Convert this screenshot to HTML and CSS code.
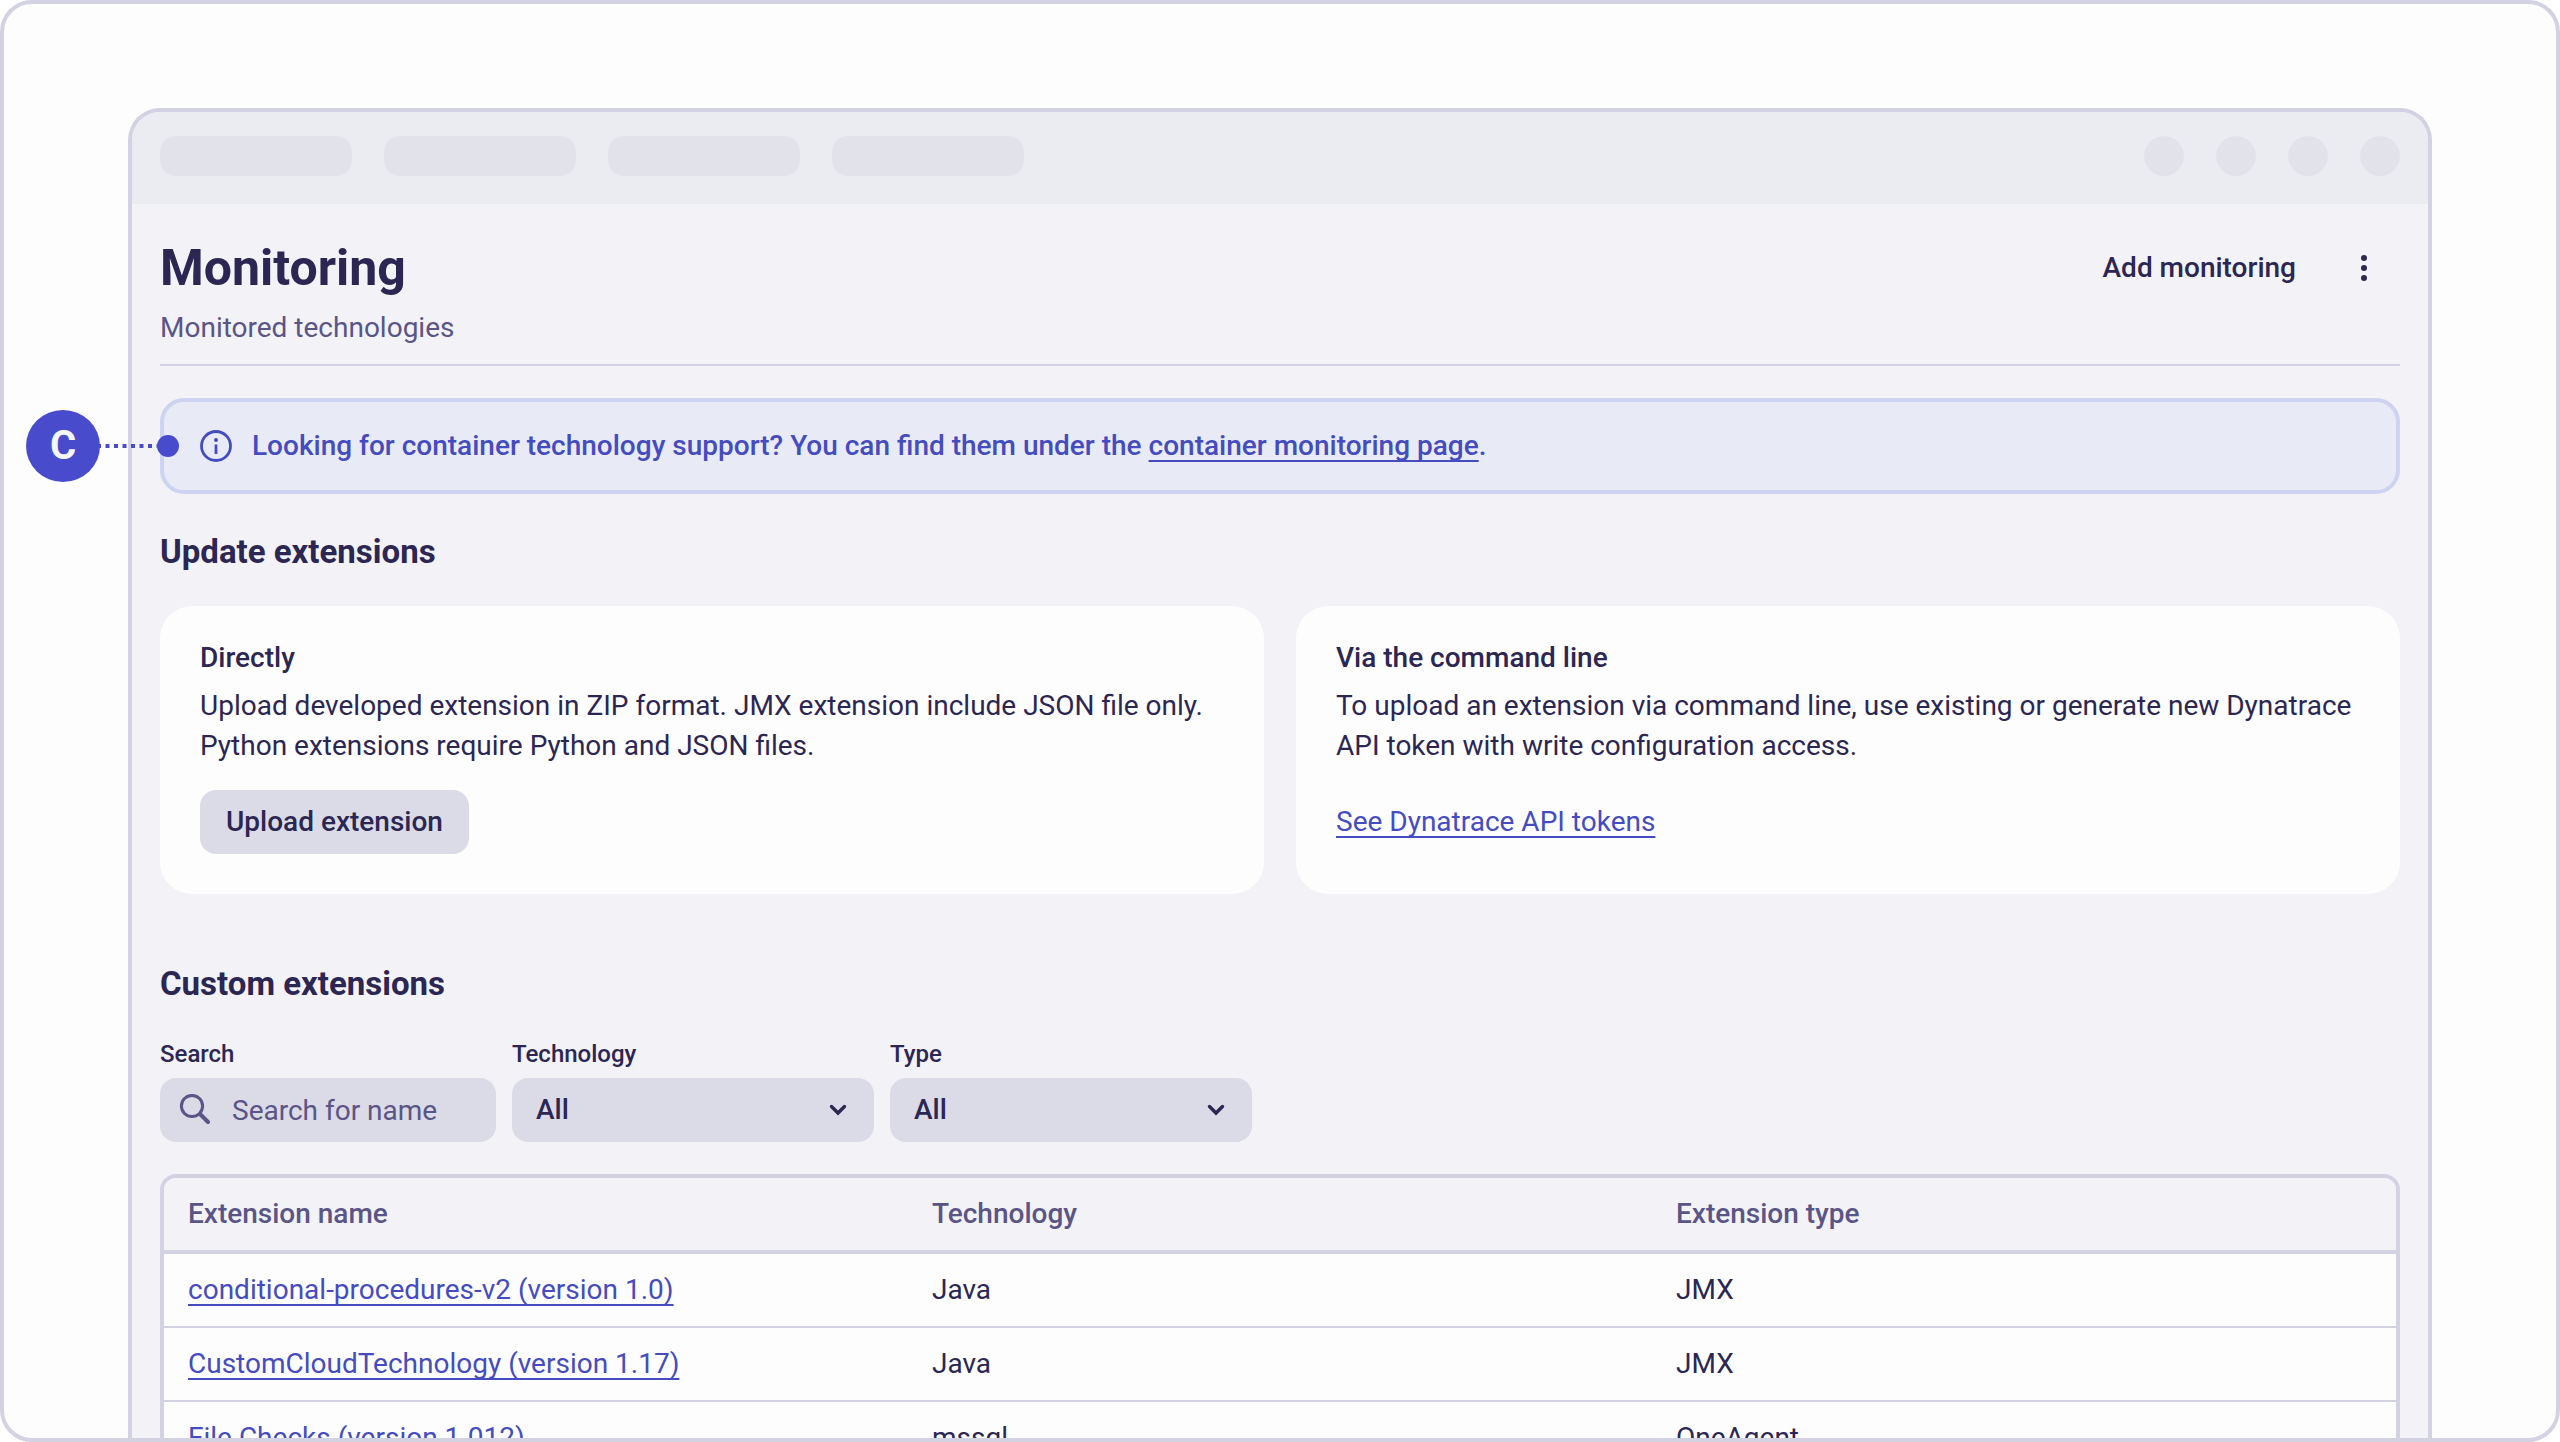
FILE: index.html
```html
<!DOCTYPE html>
<html lang="en">
<head>
<meta charset="utf-8">
<title>Monitoring</title>
<meta name="viewport" content="width=device-width, initial-scale=1">
<link rel="stylesheet" href="styles.css">
</head>
<body>
<div class="stage">
  <div class="window">
    <div class="topbar">
      <div class="topbar-group">
        <span class="pill"></span><span class="pill"></span><span class="pill"></span><span class="pill"></span>
      </div>
      <div class="topbar-group">
        <span class="dot"></span><span class="dot"></span><span class="dot"></span><span class="dot"></span>
      </div>
    </div>
    <main class="content">
      <header class="page-header">
        <div>
          <h1 class="title">Monitoring</h1>
          <p class="subtitle">Monitored technologies</p>
        </div>
        <div class="actions">
          <button class="ghost" type="button">Add monitoring</button>
          <button class="kebab" type="button" aria-label="More actions">
            <svg width="8" height="28" viewBox="0 0 8 28"><circle cx="4" cy="4" r="3"/><circle cx="4" cy="14" r="3"/><circle cx="4" cy="24" r="3"/></svg>
          </button>
        </div>
      </header>

      <div class="banner">
        <svg class="banner-icon" width="32" height="32" viewBox="0 0 32 32" aria-hidden="true">
          <circle cx="16" cy="16" r="14.5" fill="none" stroke="currentColor" stroke-width="2.8"/>
          <circle cx="16" cy="10" r="2" fill="currentColor"/>
          <path d="M16 14.5V24" stroke="currentColor" stroke-width="2.8"/>
        </svg>
        <p class="banner-text">Looking for container technology support? You can find them under the <a href="#containers">container monitoring page</a>.</p>
        <div class="marker" aria-hidden="true">
          <span class="marker-badge">C</span>
          <svg class="marker-line" width="80" height="22" viewBox="0 0 80 22"><path d="M-2 11H58" stroke="currentColor" stroke-width="4" stroke-dasharray="4 4.5"/><circle cx="69" cy="11" r="11" fill="currentColor"/></svg>
        </div>
      </div>

      <h2 class="section-title">Update extensions</h2>
      <div class="cards">
        <section class="card">
          <h3 class="card-title">Directly</h3>
          <p class="card-text">Upload developed extension in ZIP format. JMX extension include JSON file only. Python extensions require Python and JSON files.</p>
          <button class="button" type="button">Upload extension</button>
        </section>
        <section class="card">
          <h3 class="card-title">Via the command line</h3>
          <p class="card-text">To upload an extension via command line, use existing or generate new Dynatrace API token with write configuration access.</p>
          <a class="card-link" href="#tokens">See Dynatrace API tokens</a>
        </section>
      </div>

      <h2 class="section-title section-title-custom">Custom extensions</h2>
      <form class="filters">
        <div class="field field-search">
          <label for="search">Search</label>
          <div class="control">
            <svg class="search-icon" width="32" height="32" viewBox="0 0 32 32" aria-hidden="true"><g fill="none" stroke="currentColor" stroke-linecap="round"><circle cx="14" cy="12" r="10.6" stroke-width="3"/><path d="M22.5 20.5L30 28" stroke-width="4"/></g></svg>
            <input id="search" type="text" placeholder="Search for name">
          </div>
        </div>
        <div class="field field-select">
          <label for="technology">Technology</label>
          <div class="control">
            <select id="technology"><option>All</option></select>
            <svg class="chevron" width="20" height="14" viewBox="0 0 20 14" aria-hidden="true"><path d="M3.5 2.5L10 9l6.5-6.5" fill="none" stroke="currentColor" stroke-width="3.4" stroke-linecap="round"/></svg>
          </div>
        </div>
        <div class="field field-select">
          <label for="type">Type</label>
          <div class="control">
            <select id="type"><option>All</option></select>
            <svg class="chevron" width="20" height="14" viewBox="0 0 20 14" aria-hidden="true"><path d="M3.5 2.5L10 9l6.5-6.5" fill="none" stroke="currentColor" stroke-width="3.4" stroke-linecap="round"/></svg>
          </div>
        </div>
      </form>

      <div class="table-frame">
        <table class="table">
          <thead>
            <tr><th scope="col">Extension name</th><th scope="col">Technology</th><th scope="col">Extension type</th></tr>
          </thead>
          <tbody>
            <tr><td><a href="#e1">conditional-procedures-v2 (version 1.0)</a></td><td>Java</td><td>JMX</td></tr>
            <tr><td><a href="#e2">CustomCloudTechnology (version 1.17)</a></td><td>Java</td><td>JMX</td></tr>
            <tr><td><a href="#e3">File Checks (version 1.012)</a></td><td>mssql</td><td>OneAgent</td></tr>
          </tbody>
        </table>
      </div>
    </main>
  </div>
</div>
</body>
</html>
```
FILE: styles.css
```css
:root {
  --ink: #2c2653;
  --muted: #5a5586;
  --link: #454cc0;
  --accent: #484ccc;
  --line: #d3d2e2;
  --page: #fdfdfe;
  --surface: #f2f2f7;
  --control: #dadbe6;
}

* { box-sizing: border-box; }

body {
  margin: 0;
  background: #fff;
  color: var(--ink);
  font: 400 28px/40px Roboto, "Noto Sans", sans-serif;
}

h1, h2, h3, p { margin: 0; }
a { color: var(--link); text-decoration-thickness: 2px; text-underline-offset: 5px; text-decoration-skip-ink: none; }
button, input, select { margin: 0; border: 0; font: inherit; color: inherit; background: none; }

.stage {
  height: 100vh;
  padding: 104px 124px 0;
  border: 4px solid var(--line);
  border-radius: 32px;
  background: var(--page);
  overflow: hidden;
}

.window {
  border: 4px solid var(--line);
  border-bottom: 0;
  border-radius: 32px 32px 0 0;
  background: var(--surface);
}

.topbar {
  display: flex;
  justify-content: space-between;
  padding: 24px 28px 28px;
  border-radius: 28px 28px 0 0;
  background: #ebecf1;
}
.topbar-group { display: flex; gap: 32px; }
.pill { width: 192px; height: 40px; border-radius: 16px; background: #e2e3ea; }
.dot { width: 40px; height: 40px; border-radius: 50%; background: #e2e3ea; }

.content { padding: 32px 28px 0; }

.page-header {
  display: flex;
  justify-content: space-between;
  align-items: flex-start;
  padding-bottom: 16px;
  border-bottom: 2px solid var(--line);
}
.title { font-size: 50px; line-height: 64px; font-weight: 700; }
.subtitle { margin-top: 8px; color: var(--muted); }
.actions { display: flex; align-items: center; height: 64px; }
.ghost { padding: 0 24px; font-weight: 500; }
.kebab { display: flex; justify-content: center; width: 64px; padding: 0; margin: 0 4px 0 12px; }
.kebab svg { fill: var(--ink); }

.banner {
  position: relative;
  display: flex;
  align-items: center;
  gap: 20px;
  margin-top: 32px;
  padding: 24px 36px;
  border: 4px solid #cdd3f1;
  border-radius: 24px;
  background: #e8ebf6;
  color: var(--link);
  font-weight: 500;
}
.banner-icon { flex: none; }

.marker { position: absolute; left: -138px; top: 8px; display: flex; align-items: center; color: var(--accent); }
.marker-badge {
  width: 74px;
  border-radius: 50%;
  background: var(--accent);
  color: #f4f5fd;
  font-size: 40px;
  line-height: 72px;
  font-weight: 700;
  text-align: center;
}
.marker-line { margin-left: -1px; overflow: visible; }

.section-title { margin-top: 36px; font-size: 33px; line-height: 44px; font-weight: 700; }
.section-title-custom { margin-top: 68px; }

.cards { display: grid; grid-template-columns: 1fr 1fr; gap: 32px; margin-top: 32px; }
.card { padding: 32px 40px 40px; border-radius: 32px; background: var(--page); }
.card-title { font-size: 28px; font-weight: 500; }
.card-text { margin-top: 8px; }
.button {
  display: block;
  margin-top: 24px;
  padding: 12px 26px;
  border-radius: 16px;
  background: var(--control);
  font-weight: 500;
}
.card-link { display: inline-block; margin-top: 36px; }

.filters { display: flex; gap: 16px; margin-top: 32px; }
.field label { display: block; font-size: 24px; line-height: 32px; font-weight: 500; margin-bottom: 8px; }
.field-search { width: 336px; }
.field-select { width: 362px; }
.control { position: relative; height: 64px; border-radius: 16px; background: var(--control); }
.control input, .control select { width: 100%; height: 64px; padding: 0 24px; appearance: none; }
.control select { font-weight: 500; }
.control input { padding-left: 72px; }
.control input::placeholder { color: var(--muted); opacity: 1; }
.search-icon { position: absolute; left: 18px; top: 16px; color: var(--muted); }
.chevron { position: absolute; right: 26px; top: 26px; pointer-events: none; }

.table-frame {
  margin-top: 32px;
  border: 4px solid var(--line);
  border-radius: 16px;
  background: var(--page);
  overflow: hidden;
}
.table { width: 100%; table-layout: fixed; border-collapse: separate; border-spacing: 0; }
.table th, .table td { padding: 16px 24px; text-align: left; }
.table th { border-bottom: 4px solid var(--line); background: var(--surface); color: var(--muted); font-weight: 500; }
.table td { border-bottom: 2px solid var(--line); }
```
